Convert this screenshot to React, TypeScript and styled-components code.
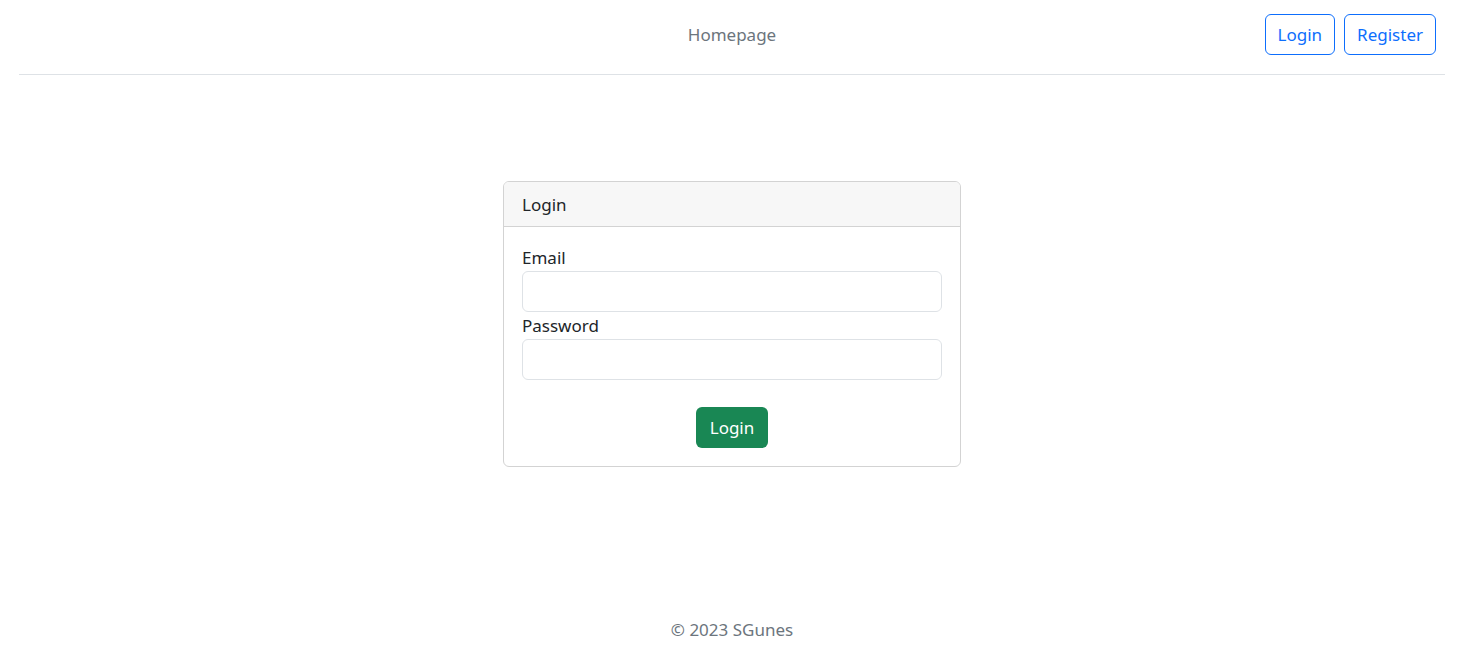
import React from "react";
import styled, { createGlobalStyle } from "styled-components";

const Global = createGlobalStyle`
  html, body { margin: 0; padding: 0; background: #fff; }
  body { font-family: "Noto Sans", "Open Sans", sans-serif; color: #212529; }
  * { box-sizing: border-box; }
`;

const Page = styled.div`
  display: flex;
  flex-direction: column;
  min-height: 670px;
  padding: 0 12px 0 19px;
`;

const Header = styled.header`
  display: grid;
  grid-template-columns: 1fr auto 1fr;
  align-items: center;
  height: 75px;
  padding-bottom: 6px;
  border-bottom: 1px solid #dee2e6;
`;

const NavLink = styled.a`
  grid-column: 2;
  font-size: 17px;
  color: #6c757d;
  text-decoration: none;
`;

const Actions = styled.div`
  grid-column: 3;
  display: flex;
  justify-content: flex-end;
  gap: 9px;
  padding-right: 9px;
`;

const OutlineButton = styled.button`
  height: 41px;
  padding: 0 12px;
  font-family: inherit;
  font-size: 17px;
  color: #0d6efd;
  background: #fff;
  border: 1px solid #0d6efd;
  border-radius: 6px;
`;

const Main = styled.main`
  display: flex;
  justify-content: center;
  padding-top: 106px;
  flex: 1;
`;

const Card = styled.div`
  width: 458px;
  height: 286px;
  border: 1px solid #d3d3d3;
  border-radius: 6px;
  overflow: hidden;
`;

const CardHeader = styled.div`
  height: 45px;
  display: flex;
  align-items: center;
  padding: 0 18px;
  background: #f7f7f7;
  border-bottom: 1px solid #d3d3d3;
  font-size: 17px;
`;

const CardBody = styled.div`
  padding: 18px 18px 0 18px;
  display: flex;
  flex-direction: column;
`;

const Label = styled.label`
  font-size: 17px;
  line-height: 26px;
`;

const Input = styled.input`
  height: 41px;
  width: 100%;
  border: 1px solid #dee2e6;
  border-radius: 6px;
  margin-bottom: 1px;
`;

const SubmitRow = styled.div`
  display: flex;
  justify-content: center;
  padding-top: 26px;
`;

const SubmitButton = styled.button`
  height: 41px;
  padding: 0 14px;
  font-family: inherit;
  font-size: 17px;
  color: #fff;
  background: #198754;
  border: none;
  border-radius: 6px;
`;

const Footer = styled.footer`
  text-align: center;
  font-size: 17px;
  color: #6c757d;
  padding-bottom: 29px;
`;

export default function App() {
  return (
    <Page>
      <Global />
      <Header>
        <NavLink href="#">Homepage</NavLink>
        <Actions>
          <OutlineButton>Login</OutlineButton>
          <OutlineButton>Register</OutlineButton>
        </Actions>
      </Header>
      <Main>
        <Card>
          <CardHeader>Login</CardHeader>
          <CardBody>
            <Label>Email</Label>
            <Input type="email" />
            <Label>Password</Label>
            <Input type="password" />
            <SubmitRow>
              <SubmitButton>Login</SubmitButton>
            </SubmitRow>
          </CardBody>
        </Card>
      </Main>
      <Footer>© 2023 SGunes</Footer>
    </Page>
  );
}
